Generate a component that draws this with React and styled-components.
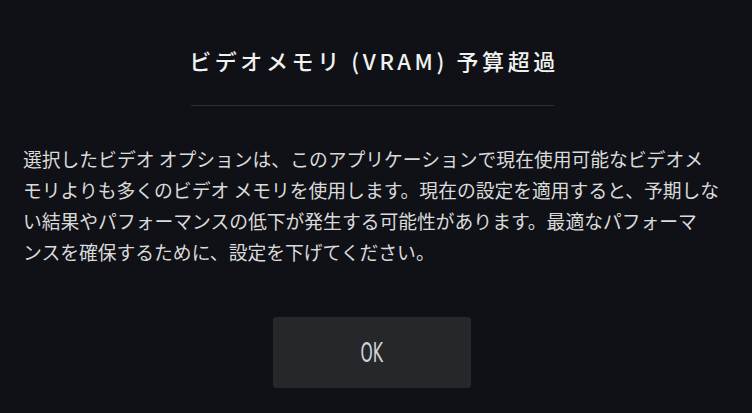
import React from 'react';
import styled, { createGlobalStyle } from 'styled-components';

const GlobalStyle = createGlobalStyle`
  html, body {
    margin: 0;
    padding: 0;
    background: #0f1116;
  }
  body {
    font-family: "Noto Sans CJK JP", "Noto Sans", sans-serif;
  }
`

const Dialog = styled.div`
  width: 752px;
  height: 413px;
  box-sizing: border-box;
  background: #0f1116;
  display: flex;
  flex-direction: column;
  align-items: center;
  padding-top: 45px;
`

const Title = styled.h1`
  margin: 0 4px 0 0;
  font-size: 22px;
  line-height: 30px;
  font-weight: 500;
  letter-spacing: 3.6px;
  color: #f1f1f1;
`

const Divider = styled.div`
  width: 363px;
  height: 1px;
  background: #2b2d33;
  margin-top: 30px;
  margin-right: 8px;
`

const Body = styled.p`
  margin: 37px 0 0 0;
  align-self: stretch;
  padding-left: 23px;
  font-size: 18.8px;
  line-height: 31px;
  color: #dadada;
  white-space: nowrap;
`

const Button = styled.button`
  margin-top: 50px;
  margin-right: 8px;
  width: 198px;
  height: 71px;
  border: none;
  border-radius: 3px;
  background: #25272b;
  display: flex;
  align-items: center;
  justify-content: center;
  cursor: pointer;
`

const ButtonLabel = styled.span`
  font-family: "DejaVu Sans", "Liberation Sans", sans-serif;
  font-size: 26px;
  color: #d4d4d4;
  display: inline-block;
  transform: scaleX(0.6);
`

const lines = [
  '選択したビデオ オプションは、このアプリケーションで現在使用可能なビデオメ',
  'モリよりも多くのビデオ メモリを使用します。現在の設定を適用すると、予期しな',
  'い結果やパフォーマンスの低下が発生する可能性があります。最適なパフォーマ',
  'ンスを確保するために、設定を下げてください。',
]

export default function App() {
  return (
    <>
      <GlobalStyle />
      <Dialog>
        <Title>ビデオメモリ (VRAM) 予算超過</Title>
        <Divider />
        <Body>
          {lines.map((line, i) => (
            <React.Fragment key={i}>
              {line}
              {i < lines.length - 1 && <br />}
            </React.Fragment>
          ))}
        </Body>
        <Button>
          <ButtonLabel>OK</ButtonLabel>
        </Button>
      </Dialog>
    </>
  )
}
